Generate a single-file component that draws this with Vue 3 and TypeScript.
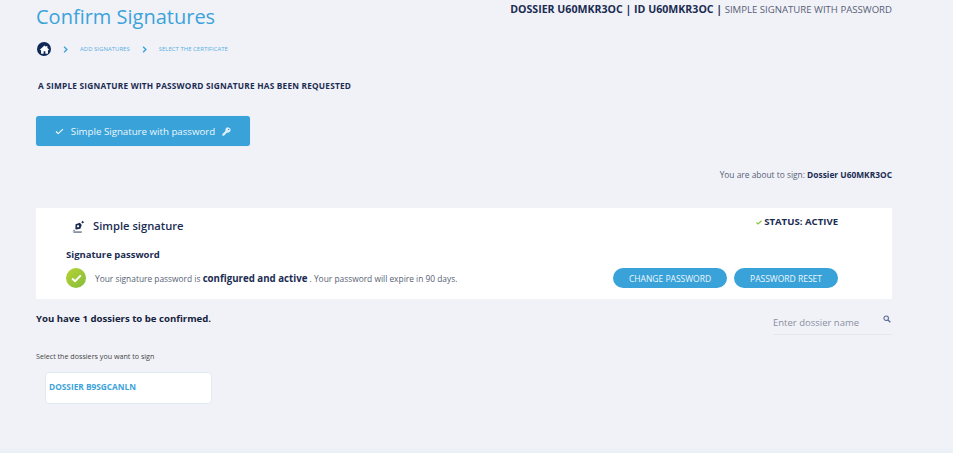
<template>
  <div class="page">
    <header class="top">
      <div>
        <h1 class="title">Confirm Signatures</h1>
        <nav class="crumbs">
          <span class="home">
            <svg viewBox="0 0 16 16" width="11" height="11"><path fill="#fff" d="M8 2 1 8.200l.8.9L3 8.100V14h3.700v-3.600h2.600V14H13V8.100l1.200 1 .8-.9-2.800-2.500V3h-1.600v1.300z" /></svg>
          </span>
          <svg class="chev" viewBox="0 0 6 10" width="5" height="7"><path d="M1 1l4 4-4 4" /></svg>
          <span>ADD SIGNATURES</span>
          <svg class="chev" viewBox="0 0 6 10" width="5" height="7"><path d="M1 1l4 4-4 4" /></svg>
          <span>SELECT THE CERTIFICATE</span>
        </nav>
      </div>
      <div class="dossier-head"><b>DOSSIER U60MKR3OC | ID U60MKR3OC |</b> SIMPLE SIGNATURE WITH PASSWORD</div>
    </header>

    <p class="requested">A SIMPLE SIGNATURE WITH PASSWORD SIGNATURE HAS BEEN REQUESTED</p>

    <button class="sig-type">
      <svg viewBox="0 0 12 10" width="9" height="7"><path d="M1 5l3.200 3L11 1.500" fill="none" stroke="#fff" stroke-width="1.600" /></svg>
      <span>Simple Signature with password</span>
      <svg viewBox="0 0 12 12" width="9" height="9">
        <path fill="#dfeef8" fill-rule="evenodd" d="M8 .5a3.500 3.500 0 0 0-3.300 4.700L.5 9.400v2.100h2.100l4.200-4.200A3.500 3.500 0 1 0 8 .5zm.8 1.800a1 1 0 1 1 0 2 1 1 0 0 1 0-2z" />
      </svg>
    </button>

    <p class="about">You are about to sign: <b>Dossier U60MKR3OC</b></p>

    <section class="panel">
      <div class="panel-main">
        <div class="panel-title">
          <svg viewBox="0 0 14 14" width="13" height="13">
            <path fill="#1b2c52" fill-rule="evenodd" d="M3.800 4.500l4.700-1.500 2 2.500L9 9.500l-4.500.7-.9-.8zM6.500 5.500a1.200 1.200 0 1 0 .01 0z" />
            <path stroke="#1b2c52" fill="none" d="M1.500 13h9M3 10.500l-1.500 1.500" />
            <path fill="#1b2c52" d="M11.500.5l.6 1.200 1.200.6-1.200.6-.6 1.200-.6-1.200-1.200-.6 1.200-.6z" />
          </svg>
          <span>Simple signature</span>
        </div>
        <div class="panel-sub">Signature password</div>
        <div class="panel-state">
          <span class="ok">
            <svg viewBox="0 0 12 10" width="11" height="9"><path d="M1.200 5l3.200 3 6.400-6.500" fill="none" stroke="#fff" stroke-width="2.200" /></svg>
          </span>
          <span class="state-text">Your signature password is <b>configured and active</b> . Your password will expire in 90 days.</span>
        </div>
      </div>
      <div class="panel-side">
        <div class="status">
          <svg viewBox="0 0 12 10" width="6" height="5"><path d="M1 5l3.200 3L11 1.500" fill="none" stroke="#8cc63f" stroke-width="2.400" /></svg>
          STATUS: ACTIVE
        </div>
        <div class="actions">
          <button class="pill change">CHANGE PASSWORD</button>
          <button class="pill reset">PASSWORD RESET</button>
        </div>
      </div>
    </section>

    <div class="list-head">
      <strong>You have {{ dossiers.length }} dossiers to be confirmed.</strong>
      <label class="search">
        <input type="text" placeholder="Enter dossier name" />
        <svg viewBox="0 0 12 12" width="8" height="8"><circle cx="4.800" cy="4.800" r="3.400" fill="none" stroke="#5d6b94" stroke-width="1.600" /><path d="M7.500 7.500L11 11" stroke="#5d6b94" stroke-width="2" /></svg>
      </label>
    </div>

    <p class="select-hint">Select the dossiers you want to sign</p>
    <div class="cards">
      <div v-for="d in dossiers" :key="d" class="card">{{ d }}</div>
    </div>
  </div>
</template>

<script setup lang="ts">
// Dossiers waiting for a signature
const dossiers: string[] = ["DOSSIER B9SGCANLN"];
</script>

<style>
html,
body {
  background: #f1f2f8;
}
</style>

<style scoped>
.page {
  box-sizing: border-box;
  width: 953px;
  height: 453px;
  padding: 0 61px 0 36px;
  font-family: "Open Sans", sans-serif;
  color: #1b2c52;
  background: linear-gradient(#f1f2f8 446px, #e9f0f7 453px);
  overflow: hidden;
}
.top {
  display: flex;
  justify-content: space-between;
  align-items: flex-start;
}
.title {
  margin: 2px 0 0;
  font-size: 20px;
  line-height: 29px;
  font-weight: 500;
  color: #3ba3da;
}
.crumbs {
  display: flex;
  align-items: center;
  margin-top: 10px;
  height: 16px;
  font-size: 6px;
  color: #5aaee0;
}
.home {
  display: flex;
  align-items: center;
  justify-content: center;
  width: 14px;
  height: 14px;
  margin-left: 1px;
  border-radius: 50%;
  background: #0f2a56;
}
.chev {
  margin: 0 12px;
  fill: none;
  stroke: #3ba3da;
  stroke-width: 2;
}
.dossier-head {
  margin-top: 2px;
  font-size: 9.6px;
  line-height: 15px;
  color: #585f75;
}
.dossier-head b {
  font-size: 10.6px;
  color: #1b2c52;
}
.requested {
  margin: 23px 0 0 2px;
  font-size: 8.3px;
  line-height: 12px;
  font-weight: 700;
  letter-spacing: 0.2px;
}
.sig-type {
  display: flex;
  align-items: center;
  justify-content: center;
  gap: 7px;
  width: 214px;
  height: 30px;
  margin-top: 24px;
  border: 0;
  border-radius: 3px;
  background: #38a2d9;
  color: #eef7fc;
  font: 400 9.7px "Open Sans", sans-serif;
  box-shadow: 0 0 1px #9fd0ec;
}
.about {
  margin: 23px 0 0;
  text-align: right;
  font-size: 8.4px;
  line-height: 12px;
  color: #585f75;
}
.about b {
  color: #1b2c52;
}
.panel {
  display: flex;
  justify-content: space-between;
  height: 91px;
  margin-top: 27px;
  padding: 0 54px 0 30px;
  background: #fff;
}
.panel-title {
  display: flex;
  align-items: center;
  gap: 8px;
  margin: 9px 0 0 6px;
  font-size: 11.2px;
  line-height: 18px;
  font-weight: 600;
}
.panel-sub {
  margin-top: 13px;
  font-size: 9.5px;
  line-height: 13px;
  font-weight: 700;
}
.panel-state {
  display: flex;
  align-items: center;
  gap: 9px;
  margin-top: 7px;
}
.ok {
  display: flex;
  align-items: center;
  justify-content: center;
  width: 20px;
  height: 20px;
  border-radius: 50%;
  background: linear-gradient(135deg, #b7d334, #84bd3c);
}
.state-text {
  font-size: 8.4px;
  color: #585f75;
}
.state-text b {
  font-size: 9.7px;
  color: #1b2c52;
}
.panel-side {
  display: flex;
  flex-direction: column;
  justify-content: space-between;
  align-items: flex-end;
  padding: 8px 0 11px;
}
.status {
  font-size: 9.6px;
  line-height: 12px;
  font-weight: 700;
}
.actions {
  display: flex;
  gap: 7px;
}
.pill {
  height: 20px;
  padding: 0;
  border: 0;
  border-radius: 10px;
  background: #38a2d9;
  color: #eef7fc;
  font: 400 8.5px "Open Sans", sans-serif;
}
.change {
  width: 114px;
}
.reset {
  width: 104px;
}
.list-head {
  display: flex;
  justify-content: space-between;
  align-items: flex-start;
}
.list-head strong {
  margin-top: 13px;
  font-size: 9.6px;
  line-height: 14px;
  color: #15223c;
}
.search {
  display: flex;
  align-items: flex-start;
  justify-content: space-between;
  width: 119px;
  height: 35px;
  border-bottom: 1px solid #e6e7ee;
}
.search input {
  width: 100px;
  height: 16px;
  margin-top: 15px;
  padding: 0;
  border: 0;
  outline: 0;
  background: transparent;
  font: 400 9.5px "Open Sans", sans-serif;
  color: #585f75;
}
.search input::placeholder {
  color: #8a8f9f;
}
.search svg {
  margin: 16px 1px 0 0;
}
.select-hint {
  margin: 16px 0 0;
  font-size: 7.15px;
  line-height: 10px;
  color: #444;
}
.cards {
  display: flex;
  margin: 11px 0 0 9px;
}
.card {
  box-sizing: border-box;
  width: 167px;
  height: 32px;
  padding-left: 3px;
  border: 1px solid #e2e8f2;
  border-radius: 4px;
  background: #fff;
  font-size: 8.3px;
  line-height: 28px;
  font-weight: 700;
  color: #3ba3da;
}
</style>
